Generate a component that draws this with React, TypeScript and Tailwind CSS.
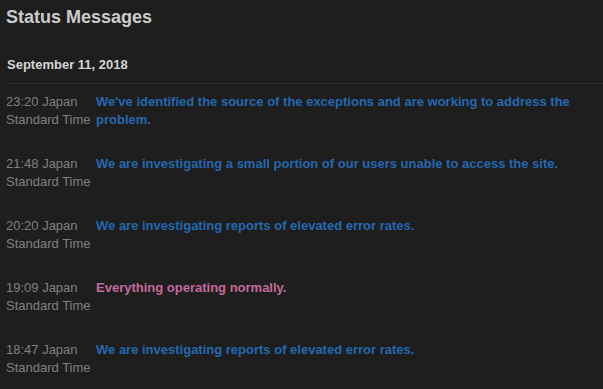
import React from "react";

const rows = [
  { time: "23:20 Japan Standard Time", msg: "We've identified the source of the exceptions and are working to address the problem.", pink: false },
  { time: "21:48 Japan Standard Time", msg: "We are investigating a small portion of our users unable to access the site.", pink: false },
  { time: "20:20 Japan Standard Time", msg: "We are investigating reports of elevated error rates.", pink: false },
  { time: "19:09 Japan Standard Time", msg: "Everything operating normally.", pink: true },
  { time: "18:47 Japan Standard Time", msg: "We are investigating reports of elevated error rates.", pink: false },
];

export default function App() {
  return (
    <div className="w-[603px] h-[389px] overflow-hidden bg-[#1e1e1e]" style={{ fontFamily: '"Liberation Sans", Arial, sans-serif' }}>
      <h1 className="pl-[6px] pt-[6px] text-[18px] leading-[22px] font-bold text-[#cccccc]">Status Messages</h1>
      <div className="ml-[6px] mt-[29px] border-b border-[#2b2b2b] pb-[10px]">
        <h2 className="pl-[1px] text-[13px] leading-[16px] font-bold text-[#d4d4d4]">September 11, 2018</h2>
      </div>
      <div className="pl-[6px] pr-[6px] pt-[9px]">
        {rows.map((r, i) => (
          <div key={i} className="flex pb-[26px] text-[13px] leading-[18px]">
            <div className="w-[90px] shrink-0 pr-[4px] text-[#808080]">{r.time}</div>
            <div className={"flex-1 font-bold " + (r.pink ? "text-[#c46a98]" : "text-[#2468b0]")}>{r.msg}</div>
          </div>
        ))}
      </div>
    </div>
  );
}
